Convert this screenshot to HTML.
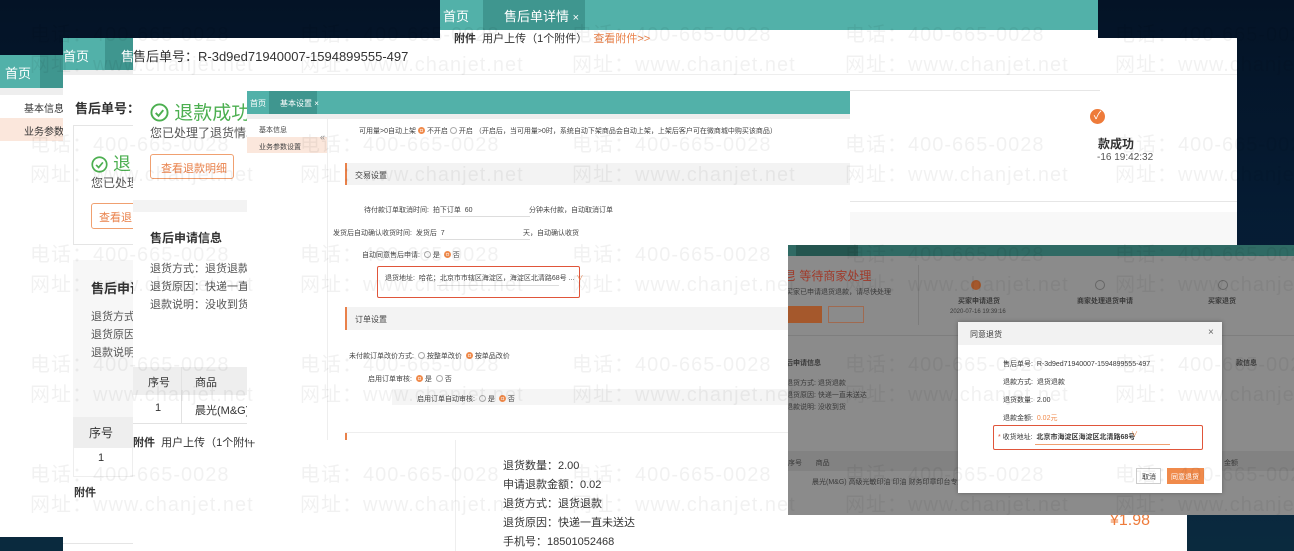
<!DOCTYPE html>
<html><head><meta charset="utf-8">
<style>
*{margin:0;padding:0;box-sizing:border-box}
body{width:1294px;height:551px;overflow:hidden;position:relative;background:linear-gradient(180deg,#041326 0%,#06203a 60%,#0a2a3e 100%);font-family:"Liberation Sans","Noto Sans CJK SC",sans-serif;color:#333}
.a{position:absolute}
.p{position:absolute;background:#fff;overflow:hidden}
.teal{position:absolute;background:#52b1a9}
.tab{position:absolute;background:#3f968f;color:#fff}
.t{position:absolute;white-space:nowrap}
.wm{position:absolute;white-space:nowrap;font-size:20px;color:rgba(0,0,0,0.055);letter-spacing:1px}
.sec{position:absolute;background:#f3f3f3;border-left:2px solid #e9814a}
.r{display:inline-block;width:7px;height:7px;border-radius:50%;border:1px solid #aaa;vertical-align:-1px;margin-right:2px}
.ro{border:2px solid #f08a4b;background:radial-gradient(#f08a4b 40%,#fff 45%)}
.ck{display:inline-block;vertical-align:-3px}
</style></head><body>

<!-- Panel A -->
<div class="p" style="left:0;top:55px;width:70px;height:482px">
  <div class="teal" style="left:0;top:0;width:70px;height:33px"></div>
  <div class="tab" style="left:40px;top:0;width:30px;height:33px"></div>
  <div class="t" style="left:5px;top:8px;color:#fff;font-size:13px">首页</div>
  <div class="a" style="left:0;top:33px;width:70px;height:7px;background:#eee"></div>
  <div class="t" style="left:24px;top:45px;font-size:10px">基本信息</div>
  <div class="a" style="left:0;top:63px;width:70px;height:23px;background:#fbe7dc"></div>
  <div class="t" style="left:24px;top:68px;font-size:10px">业务参数设</div>
</div>

<!-- Panel B -->
<div class="p" style="left:63px;top:38px;width:380px;height:513px">
  <div class="teal" style="left:0;top:0;width:380px;height:32px"></div>
  <div class="tab" style="left:42px;top:0;width:40px;height:32px"></div>
  <div class="t" style="left:0;top:8px;color:#fff;font-size:13px">首页</div>
  <div class="t" style="left:58px;top:8px;color:#fff;font-size:13px">售</div>
  <div class="a" style="left:0;top:32px;width:380px;height:5px;background:#eee"></div>
  <div class="t" style="left:12px;top:60px;font-size:13px;font-weight:bold">售后单号：</div>
  <div class="a" style="left:10px;top:87px;width:120px;height:120px;border:1px solid #e5e5e5"></div>
  <div class="t" style="left:28px;top:112px;font-size:18px;color:#4caf50"><svg class="ck" width="17" height="17" viewBox="0 0 20 20"><circle cx="10" cy="10" r="8.5" fill="none" stroke="#4caf50" stroke-width="2"/><path d="M6 10.5l3 3 5-6" fill="none" stroke="#4caf50" stroke-width="2"/></svg> 退</div>
  <div class="t" style="left:28px;top:136px;font-size:12px;color:#555">您已处理</div>
  <div class="a" style="left:28px;top:165px;width:60px;height:26px;border:1px solid #f0a070;border-radius:3px"></div>
  <div class="t" style="left:36px;top:171px;font-size:11px;color:#e9814a">查看退</div>
  <div class="a" style="left:10px;top:222px;width:120px;height:160px;background:#f7f7f7"></div>
  <div class="t" style="left:28px;top:240px;font-size:13px;font-weight:bold">售后申请</div>
  <div class="t" style="left:28px;top:270px;font-size:11px;color:#555">退货方式</div>
  <div class="t" style="left:28px;top:288px;font-size:11px;color:#555">退货原因</div>
  <div class="t" style="left:28px;top:306px;font-size:11px;color:#555">退款说明</div>
  <div class="a" style="left:10px;top:379px;width:60px;height:30px;background:#eee"></div>
  <div class="t" style="left:26px;top:386px;font-size:12px">序号</div>
  <div class="a" style="left:10px;top:409px;width:60px;height:30px;border:1px solid #eee"></div>
  <div class="t" style="left:35px;top:414px;font-size:11px">1</div>
  <div class="t" style="left:11px;top:446px;font-size:11px;font-weight:bold">附件</div>
  <div class="a" style="left:0;top:505px;width:380px;height:1px;background:#e5e5e5"></div>
</div>

<!-- Panel C -->
<div class="p" style="left:133px;top:38px;width:330px;height:513px">
  <div class="t" style="left:0;top:8px;font-size:13px">售后单号：R-3d9ed71940007-1594899555-497</div>
  <div class="a" style="left:0;top:36px;width:330px;height:1px;background:#eee"></div>
  <div class="t" style="left:17px;top:60px;font-size:19px;color:#4caf50"><svg class="ck" width="19" height="19" viewBox="0 0 20 20"><circle cx="10" cy="10" r="8.5" fill="none" stroke="#4caf50" stroke-width="2"/><path d="M6 10.5l3 3 5-6" fill="none" stroke="#4caf50" stroke-width="2"/></svg> 退款成功</div>
  <div class="t" style="left:17px;top:86px;font-size:12px;color:#555">您已处理了退货情况</div>
  <div class="a" style="left:17px;top:116px;width:84px;height:25px;border:1px solid #f0a070;border-radius:3px"></div>
  <div class="t" style="left:28px;top:122px;font-size:11px;color:#e9814a">查看退款明细</div>
  <div class="a" style="left:0;top:162px;width:330px;height:12px;background:#f3f3f3"></div>
  <div class="t" style="left:17px;top:191px;font-size:12px;font-weight:bold">售后申请信息</div>
  <div class="t" style="left:17px;top:222px;font-size:11px;color:#555">退货方式：退货退款</div>
  <div class="t" style="left:17px;top:240px;font-size:11px;color:#555">退货原因：快递一直未</div>
  <div class="t" style="left:17px;top:258px;font-size:11px;color:#555">退款说明：没收到货</div>
  <div class="a" style="left:0;top:329px;width:330px;height:28px;background:#eee"></div>
  <div class="t" style="left:15px;top:336px;font-size:11px">序号</div>
  <div class="t" style="left:62px;top:336px;font-size:11px">商品</div>
  <div class="a" style="left:48px;top:329px;width:1px;height:56px;background:#e2e2e2"></div>
  <div class="t" style="left:22px;top:364px;font-size:11px">1</div>
  <div class="t" style="left:62px;top:364px;font-size:11px">晨光(M&amp;G)</div>
  <div class="a" style="left:0;top:385px;width:330px;height:1px;background:#e2e2e2"></div>
  <div class="t" style="left:0;top:396px;font-size:11px"><b>附件</b>&nbsp;&nbsp;用户上传（1个附件</div>
</div>

<!-- Panel E (right white) -->
<div class="p" style="left:440px;top:38px;width:797px;height:207px">
  <div class="a" style="left:0;top:36px;width:797px;height:1px;background:#eee"></div>
  <div class="a" style="left:410px;top:52px;width:250px;height:1px;background:#e6e6e6"></div>
  <div class="a" style="left:0;top:163px;width:797px;height:1px;background:#e6e6e6"></div>
  <div class="a" style="left:0;top:174px;width:797px;height:40px;background:#f8f8f8"></div>
  <div class="a" style="left:650px;top:71px;width:15px;height:15px;border-radius:50%;background:#ee7b3a;color:#fff;font-size:11px;line-height:15px;text-align:center">✓</div>
  <div class="t" style="left:658px;top:97px;font-size:12px;font-weight:bold">款成功</div>
  <div class="t" style="left:657px;top:114px;font-size:10px;color:#555">-16 19:42:32</div>
</div>

<!-- Panel D (top) -->
<div class="p" style="left:440px;top:0;width:658px;height:50px">
  <div class="teal" style="left:0;top:0;width:658px;height:30px"></div>
  <div class="tab" style="left:43px;top:0;width:102px;height:30px"></div>
  <div class="t" style="left:3px;top:6px;color:#fff;font-size:13px">首页</div>
  <div class="t" style="left:64px;top:6px;color:#fff;font-size:13px">售后单详情 <span style="font-size:11px">×</span></div>
  <div class="t" style="left:14px;top:30px;font-size:11px"><b>附件</b>&nbsp;&nbsp;用户上传（1个附件）&nbsp;&nbsp;<span style="color:#e9814a">查看附件&gt;&gt;</span></div>
</div>

<!-- Bottom panel -->
<div class="p" style="left:455px;top:440px;width:732px;height:111px;border-left:1px solid #eee">
  <div class="t" style="left:47px;top:17px;font-size:11px">退货数量：2.00</div>
  <div class="t" style="left:47px;top:36px;font-size:11px">申请退款金额：0.02</div>
  <div class="t" style="left:47px;top:55px;font-size:11px">退货方式：退货退款</div>
  <div class="t" style="left:47px;top:74px;font-size:11px">退货原因：快递一直未送达</div>
  <div class="t" style="left:47px;top:93px;font-size:11px">手机号：18501052468</div>
  <div class="t" style="left:654px;top:72px;font-size:16px;color:#ee7b3a">¥1.98</div>
</div>

<!-- Panel F settings -->
<div class="p" style="left:247px;top:91px;width:603px;height:349px;font-size:7px;color:#444">
  <div class="teal" style="left:0;top:0;width:603px;height:23px"></div>
  <div class="tab" style="left:22px;top:0;width:48px;height:23px"></div>
  <div class="t" style="left:3px;top:7px;color:#fff;font-size:8px">首页</div>
  <div class="t" style="left:33px;top:7px;color:#fff;font-size:8px">基本设置 ×</div>
  <div class="a" style="left:0;top:23px;width:603px;height:5px;background:#eee"></div>
  <div class="a" style="left:80px;top:28px;width:1px;height:321px;background:#eee"></div>
  <div class="t" style="left:12px;top:34px">基本信息</div>
  <div class="a" style="left:0;top:46px;width:80px;height:16px;background:#fbe7dc"></div>
  <div class="t" style="left:12px;top:51px">业务参数设置</div>
  <div class="t" style="left:73px;top:41px;font-size:9px;color:#888">«</div>
  <div class="t" style="left:112px;top:35px">可用量&gt;0自动上架 <span class="r ro"></span>不开启 <span class="r"></span>开启 （开启后，当可用量&gt;0时，系统自动下架商品会自动上架，上架后客户可在微商城中购买该商品）</div>
  <div class="sec" style="left:98px;top:72px;width:505px;height:22px"></div>
  <div class="t" style="left:108px;top:79px;font-size:8px">交易设置</div>
  <div class="t" style="left:117px;top:114px">待付款订单取消时间: &nbsp;拍下订单 &nbsp;60</div>
  <div class="a" style="left:193px;top:125px;width:90px;height:1px;background:#ddd"></div>
  <div class="t" style="left:282px;top:114px">分钟未付款，自动取消订单</div>
  <div class="t" style="left:86px;top:137px">发货后自动确认收货时间: &nbsp;发货后 &nbsp;7</div>
  <div class="a" style="left:193px;top:148px;width:90px;height:1px;background:#ddd"></div>
  <div class="t" style="left:276px;top:137px">天，自动确认收货</div>
  <div class="t" style="left:115px;top:159px">自动同意售后申请: &nbsp;<span class="r"></span>是 &nbsp;<span class="r ro"></span>否</div>
  <div class="a" style="left:130px;top:175px;width:203px;height:32px;border:1.5px solid #e0553a;border-radius:2px"></div>
  <div class="t" style="left:138px;top:182px">退货地址: &nbsp;哈花；北京市市辖区海淀区，海淀区北清路68号 ... <span style="color:#e9814a">∨</span></div>
  <div class="a" style="left:190px;top:194px;width:122px;height:1px;background:#ddd"></div>
  <div class="sec" style="left:98px;top:216px;width:505px;height:23px"></div>
  <div class="t" style="left:108px;top:223px;font-size:8px">订单设置</div>
  <div class="t" style="left:102px;top:260px">未付款订单改价方式: &nbsp;<span class="r"></span>按整单改价 &nbsp;<span class="r ro"></span>按单品改价</div>
  <div class="t" style="left:121px;top:283px">启用订单审核: &nbsp;<span class="r ro"></span>是 &nbsp;<span class="r"></span>否</div>
  <div class="a" style="left:145px;top:298px;width:458px;height:16px;background:#f5f5f5"></div>
  <div class="t" style="left:170px;top:303px">启用订单自动审核: &nbsp;<span class="r"></span>是 &nbsp;<span class="r ro"></span>否</div>
  <div class="a" style="left:98px;top:341px;width:2px;height:8px;background:#e9814a"></div>
  <div class="a" style="left:98px;top:341px;width:505px;height:1px;background:#eee"></div>
</div>

<!-- Panel G modal -->
<div class="p" style="left:788px;top:245px;width:506px;height:270px;background:#8b8b8b;font-size:7px;color:#3a3a3a">
  <div class="a" style="left:0;top:0;width:506px;height:11px;background:#2f6a64"></div>
  <div class="a" style="left:8px;top:0;width:62px;height:11px;background:#24554f"></div>
  <div class="t" style="left:-4px;top:22px;font-size:12px;color:#a03a2a">㫐 等待商家处理</div>
  <div class="t" style="left:-2px;top:42px;font-size:7px">买家已申请退货退款，请尽快处理</div>
  <div class="a" style="left:-4px;top:61px;width:38px;height:17px;background:#a5582c"></div>
  <div class="a" style="left:40px;top:61px;width:36px;height:17px;border:1px solid #a06a50"></div>
  <div class="a" style="left:130px;top:20px;width:1px;height:60px;background:#7c7c7c"></div>
  <div class="a" style="left:183px;top:35px;width:10px;height:10px;border-radius:50%;background:#a5582c"></div>
  <div class="t" style="left:170px;top:51px;font-size:7px;font-weight:bold">买家申请退货</div>
  <div class="t" style="left:162px;top:64px;font-size:6px">2020-07-16 19:39:16</div>
  <div class="a" style="left:307px;top:35px;width:10px;height:10px;border-radius:50%;border:1px solid #666"></div>
  <div class="t" style="left:289px;top:51px;font-size:7px;font-weight:bold">商家处理退货申请</div>
  <div class="a" style="left:430px;top:35px;width:10px;height:10px;border-radius:50%;border:1px solid #666"></div>
  <div class="t" style="left:420px;top:51px;font-size:7px;font-weight:bold">买家退货</div>
  <div class="a" style="left:0;top:90px;width:506px;height:1px;background:#7e7e7e"></div>
  <div class="t" style="left:-2px;top:113px;font-size:7px;font-weight:bold">后申请信息</div>
  <div class="t" style="left:-2px;top:133px">退货方式: 退货退款</div>
  <div class="t" style="left:-2px;top:145px">退货原因: 快递一直未送达</div>
  <div class="t" style="left:-2px;top:157px">退款说明: 没收到货</div>
  <div class="t" style="left:448px;top:113px;font-size:7px;font-weight:bold">款信息</div>
  <div class="a" style="left:0;top:206px;width:506px;height:20px;background:#828282"></div>
  <div class="t" style="left:0;top:213px">序号 &nbsp;&nbsp;&nbsp;&nbsp;&nbsp;&nbsp;商品</div>
  <div class="t" style="left:24px;top:232px">晨光(M&amp;G) 高级光敏印油 印油 财务印章印台专用</div>
  <div class="t" style="left:436px;top:213px">金额</div>
  <div class="a" style="left:170px;top:77px;width:264px;height:171px;background:#fff;box-shadow:0 0 4px rgba(0,0,0,.3)">
    <div class="a" style="left:0;top:0;width:264px;height:23px;background:#f2f2f2"></div>
    <div class="t" style="left:12px;top:7px;font-size:8px">同意退货</div>
    <div class="t" style="left:250px;top:5px;font-size:10px;color:#666">×</div>
    <div class="t" style="left:45px;top:37px">售后单号: &nbsp;R-3d9ed71940007-1594899555-497</div>
    <div class="t" style="left:45px;top:55px">退款方式: &nbsp;退货退款</div>
    <div class="t" style="left:45px;top:73px">退货数量: &nbsp;2.00</div>
    <div class="t" style="left:45px;top:91px">退款金额: &nbsp;<span style="color:#f08a4b">0.02元</span></div>
    <div class="a" style="left:35px;top:103px;width:210px;height:25px;border:1.5px solid #e0553a;border-radius:2px"></div>
    <div class="t" style="left:40px;top:110px"><span style="color:#e0553a">*</span> 收货地址: &nbsp;<b>北京市海淀区海淀区北清路68号</b></div>
    <div class="t" style="left:173px;top:107px;color:#f08a4b">∨</div>
    <div class="a" style="left:77px;top:122px;width:135px;height:1px;background:#f0a070"></div>
    <div class="a" style="left:178px;top:146px;width:25px;height:16px;border:1px solid #ccc"></div>
    <div class="t" style="left:184px;top:150px">取消</div>
    <div class="a" style="left:209px;top:146px;width:37px;height:16px;background:#f08a4b"></div>
    <div class="t" style="left:213px;top:150px;color:#fff">同意退货</div>
  </div>
</div>

<!-- Watermarks -->
<div class="a" style="left:0;top:0;width:1294px;height:551px;pointer-events:none">
  <div class="wm" style="left:30px;top:18px">电话：400-665-0028</div><div class="wm" style="left:30px;top:48px">网址：www.chanjet.net</div>
  <div class="wm" style="left:300px;top:18px">电话：400-665-0028</div><div class="wm" style="left:300px;top:48px">网址：www.chanjet.net</div>
  <div class="wm" style="left:572px;top:18px">电话：400-665-0028</div><div class="wm" style="left:572px;top:48px">网址：www.chanjet.net</div>
  <div class="wm" style="left:845px;top:18px">电话：400-665-0028</div><div class="wm" style="left:845px;top:48px">网址：www.chanjet.net</div>
  <div class="wm" style="left:1115px;top:18px">电话：400-665-0028</div><div class="wm" style="left:1115px;top:48px">网址：www.chanjet.net</div>
  <div class="wm" style="left:30px;top:128px">电话：400-665-0028</div><div class="wm" style="left:30px;top:158px">网址：www.chanjet.net</div>
  <div class="wm" style="left:300px;top:128px">电话：400-665-0028</div><div class="wm" style="left:300px;top:158px">网址：www.chanjet.net</div>
  <div class="wm" style="left:572px;top:128px">电话：400-665-0028</div><div class="wm" style="left:572px;top:158px">网址：www.chanjet.net</div>
  <div class="wm" style="left:845px;top:128px">电话：400-665-0028</div><div class="wm" style="left:845px;top:158px">网址：www.chanjet.net</div>
  <div class="wm" style="left:1115px;top:128px">电话：400-665-0028</div><div class="wm" style="left:1115px;top:158px">网址：www.chanjet.net</div>
  <div class="wm" style="left:30px;top:238px">电话：400-665-0028</div><div class="wm" style="left:30px;top:268px">网址：www.chanjet.net</div>
  <div class="wm" style="left:300px;top:238px">电话：400-665-0028</div><div class="wm" style="left:300px;top:268px">网址：www.chanjet.net</div>
  <div class="wm" style="left:572px;top:238px">电话：400-665-0028</div><div class="wm" style="left:572px;top:268px">网址：www.chanjet.net</div>
  <div class="wm" style="left:845px;top:238px">电话：400-665-0028</div><div class="wm" style="left:845px;top:268px">网址：www.chanjet.net</div>
  <div class="wm" style="left:1115px;top:238px">电话：400-665-0028</div><div class="wm" style="left:1115px;top:268px">网址：www.chanjet.net</div>
  <div class="wm" style="left:30px;top:348px">电话：400-665-0028</div><div class="wm" style="left:30px;top:378px">网址：www.chanjet.net</div>
  <div class="wm" style="left:300px;top:348px">电话：400-665-0028</div><div class="wm" style="left:300px;top:378px">网址：www.chanjet.net</div>
  <div class="wm" style="left:572px;top:348px">电话：400-665-0028</div><div class="wm" style="left:572px;top:378px">网址：www.chanjet.net</div>
  <div class="wm" style="left:845px;top:348px">电话：400-665-0028</div><div class="wm" style="left:845px;top:378px">网址：www.chanjet.net</div>
  <div class="wm" style="left:1115px;top:348px">电话：400-665-0028</div><div class="wm" style="left:1115px;top:378px">网址：www.chanjet.net</div>
  <div class="wm" style="left:30px;top:458px">电话：400-665-0028</div><div class="wm" style="left:30px;top:488px">网址：www.chanjet.net</div>
  <div class="wm" style="left:300px;top:458px">电话：400-665-0028</div><div class="wm" style="left:300px;top:488px">网址：www.chanjet.net</div>
  <div class="wm" style="left:572px;top:458px">电话：400-665-0028</div><div class="wm" style="left:572px;top:488px">网址：www.chanjet.net</div>
  <div class="wm" style="left:845px;top:458px">电话：400-665-0028</div><div class="wm" style="left:845px;top:488px">网址：www.chanjet.net</div>
  <div class="wm" style="left:1115px;top:458px">电话：400-665-0028</div><div class="wm" style="left:1115px;top:488px">网址：www.chanjet.net</div>
</div>
</body></html>
